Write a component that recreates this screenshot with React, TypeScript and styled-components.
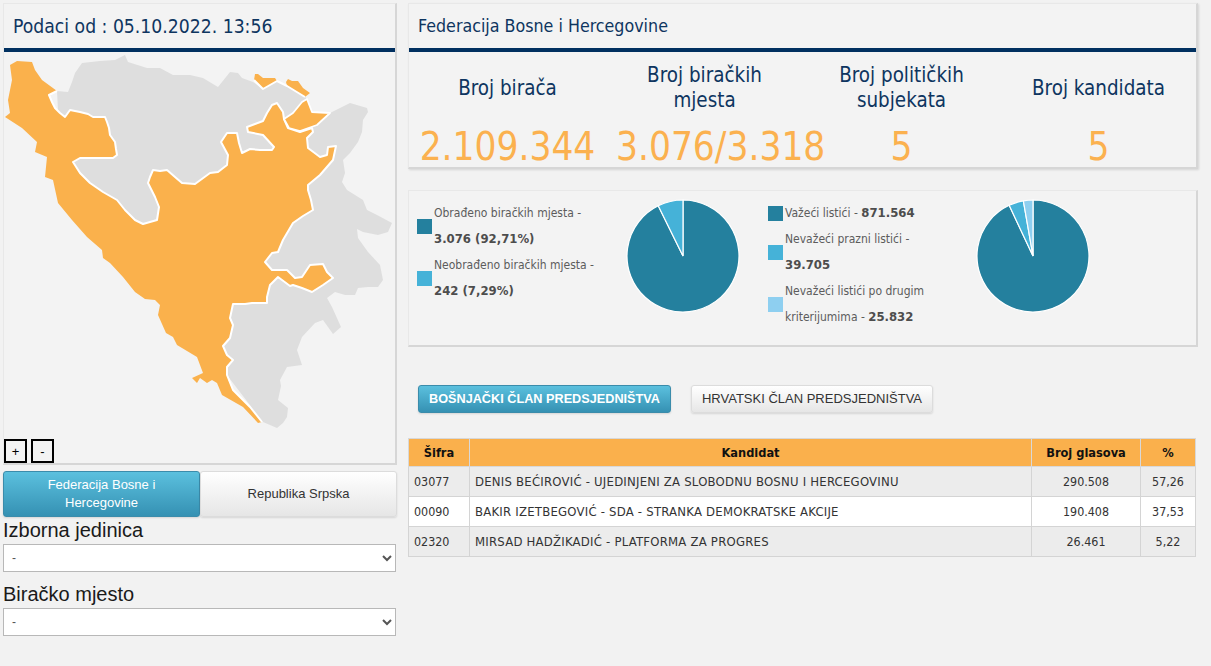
import React from "react";
import styled, { createGlobalStyle } from "styled-components";

const Global = createGlobalStyle`
  html, body { margin: 0; padding: 0; background: #f2f2f2; }
  body { font-family: "DejaVu Sans Condensed", "DejaVu Sans", sans-serif; font-stretch: condensed; overflow: hidden; }
`;

const Page = styled.div`
  display: flex;
  gap: 11px;
  padding: 3px 0 0 3px;
  width: 1211px;
  height: 666px;
  box-sizing: border-box;
`;
const LeftColumn = styled.div`
  width: 394px;
  flex: none;
  display: flex;
  flex-direction: column;
`;
const RightColumn = styled.div`
  width: 790px;
  flex: none;
  display: flex;
  flex-direction: column;
`;
const Card = styled.section`
  background: #f3f3f3;
  box-sizing: border-box;
  border-top: 1px solid #e8e8e8;
  border-left: 1px solid #e8e8e8;
  border-right: 2px solid #d6d6d6;
  border-bottom: 2px solid #d6d6d6;
`;
const MapCard = styled(Card)`
  height: 462px;
  position: relative;
`;
const CardHeader = styled.header<{ $big?: boolean }>`
  height: 44px;
  box-sizing: border-box;
  display: flex;
  align-items: center;
  padding-left: 9px;
  color: #0e3560;
  font-size: ${(p) => (p.$big ? 19.2 : 17.7)}px;
`;
const NavyRule = styled.div`
  height: 4px;
  background: #003060;
`;
const MapSvg = styled.svg`
  display: block;
  width: 392px;
  height: 411px;
`;
const ZoomControls = styled.div`
  position: absolute;
  left: 0;
  bottom: 0;
  display: flex;
  gap: 4px;
`;
const ZoomButton = styled.button`
  width: 23px;
  height: 24px;
  padding: 0;
  box-sizing: border-box;
  border: 2px solid #000;
  background: #f3f3f3;
  color: #000;
  font-family: "Liberation Sans", sans-serif;
  font-size: 13px;
`;
const RegionTabs = styled.div`
  display: flex;
  margin-top: 6px;
  height: 46px;
`;
const GradientButton = styled.button<{ $active?: boolean }>`
  box-sizing: border-box;
  font-family: "Liberation Sans", Arial, sans-serif;
  font-size: 13px;
  line-height: 18px;
  padding: 0 30px;
  border-radius: 3px;
  border: 1px solid ${(p) => (p.$active ? "#3b8cab" : "#dcdcdc")};
  color: ${(p) => (p.$active ? "#fff" : "#333")};
  background: ${(p) =>
    p.$active ? "linear-gradient(#5bc0de, #3591b3)" : "linear-gradient(#fff, #e6e6e6)"};
  box-shadow: 0 1px 2px rgba(0, 0, 0, 0.12);
`;
const RegionTab = styled(GradientButton)`
  flex: 1;
  height: 46px;
`;
const FieldLabel = styled.label`
  display: block;
  font-family: "Liberation Sans", Arial, sans-serif;
  font-size: 20px;
  line-height: 26px;
  color: #1a1a1a;
  height: 27px;
`;
const Select = styled.select`
  display: block;
  width: 393px;
  height: 28px;
  box-sizing: border-box;
  border: 1px solid #b8b8b8;
  background: #fff;
  color: #555;
  font-family: "Liberation Sans", Arial, sans-serif;
  font-size: 12px;
  padding-left: 4px;
  margin-bottom: 9px;
`;
const StatsCard = styled(Card)`
  height: 166px;
  box-shadow: 1px 1px 2px rgba(0, 0, 0, 0.12);
`;
const StatsGrid = styled.div`
  display: grid;
  grid-template-columns: repeat(4, 197px);
  height: 115px;
`;
const Stat = styled.div`
  display: grid;
  grid-template-columns: minmax(0, 1fr);
  grid-template-rows: 71px 44px;
  text-align: center;
  min-width: 0;
`;
const StatLabel = styled.div`
  align-self: center;
  color: #0e3560;
  font-size: 20.4px;
  line-height: 25px;
  padding: 0 25px;
  margin-top: 1px;
`;
const StatValue = styled.div`
  color: #fbb14f;
  font-size: 38.4px;
  line-height: 44px;
  white-space: nowrap;
  padding: 2px 10px 0;
`;
const ChartsCard = styled(Card)`
  margin-top: 21px;
  height: 157px;
  display: flex;
  padding-left: 8px;
`;
const LegendBlock = styled.div<{ $w: number }>`
  width: ${(p) => p.$w}px;
  flex: none;
  padding-top: 9px;
  box-sizing: border-box;
`;
const LegendRow = styled.div`
  display: flex;
  align-items: center;
  gap: 2px;
`;
const Swatch = styled.span<{ $c: string }>`
  width: 15px;
  height: 15px;
  flex: none;
  background: ${(p) => p.$c};
`;
const LegendText = styled.div`
  font-size: 12px;
  line-height: 26px;
  color: #5c5c5c;
  white-space: nowrap;
  b {
    color: #4d4d4d;
    font-size: 13px;
    font-family: "DejaVu Sans", sans-serif;
    font-stretch: condensed;
  }
`;
const PieSvg = styled.svg`
  width: 114px;
  height: 114px;
  margin-top: 8px;
  flex: none;
`;
const PieGap = styled.div<{ $w: number }>`
  width: ${(p) => p.$w}px;
  flex: none;
`;
const TabBar = styled.div`
  display: flex;
  gap: 20px;
  margin: 38px 0 0 10px;
`;
const PresidencyTab = styled(GradientButton)`
  height: 28px;
  font-size: ${(p) => (p.$active ? 12.7 : 13)}px;
  padding: 0;
  white-space: nowrap;
  width: ${(p) => (p.$active ? 253 : 242)}px;
  font-weight: ${(p) => (p.$active ? 700 : 400)};
`;
const Table = styled.table`
  border-collapse: collapse;
  margin-top: 25px;
  width: 787px;
  table-layout: fixed;
  font-size: 12.4px;
  color: #333;
`;
const Th = styled.th`
  background: #fab04c;
  color: #111;
  border: 1px solid #d8d8d8;
  height: 27px;
  padding: 0;
  font-size: 12.7px;
  font-family: "DejaVu Sans", sans-serif;
  font-stretch: condensed;
`;
const Tr = styled.tr<{ $odd: boolean }>`
  background: ${(p) => (p.$odd ? "#ececec" : "#fff")};
`;
const Td = styled.td<{ $center?: boolean }>`
  border: 1px solid #d4d4d4;
  height: 29px;
  padding: 0 5px;
  text-align: ${(p) => (p.$center ? "center" : "left")};
  white-space: nowrap;
`;
const NameCell = styled(Td)`
  font-size: 13px;
  letter-spacing: 0.22px;
`;

const ORANGE = "#fab14c";
const border =
  "57,91 49,95 52,102 55,108 60,113 65,117 70,110 80,112 88,114 93,117 105,117 107,122 109,128 110,135 115,142 116,149 117,155 113,158 95,158 80,158 73,162 80,173 90,183 103,192 117,200 125,210 135,220 143,224 157,220 159,207 155,197 148,183 150,177 153,170 160,171 167,170 175,177 182,183 195,184 210,173 218,172 227,165 228,155 221,142 227,133 237,133 239,143 242,153 250,149 260,150 272,150 274,147 263,135 248,132 247,127 263,121 267,113 272,105 277,103 283,112 284,119 288,128 300,132 312,128 313,132 307,138 308,148 320,157 327,155 328,147 336,146 333,160 320,175 308,185 308,190 311,200 313,210 303,216 293,223 283,240 278,252 272,253 265,262 272,270 287,270 295,278 302,277 310,265 323,264 327,272 333,278 323,285 312,292 302,288 293,285 290,286 278,277 270,285 267,297 267,303 258,303 252,303 245,304 233,304 230,318 233,325 230,338 223,346 227,355 233,360 227,367 227,375 233,390 250,407 262,422";
const coast =
  "258,423 243,407 222,395 217,383 212,380 207,383 200,378 197,383 192,378 203,373 197,357 177,345 173,337 166,333 158,315 160,305 155,300 145,299 135,292 123,277 110,263 103,258 102,250 87,237 72,220 58,203 53,180 45,177 47,157 35,152 37,142 22,128 5,117 10,113 8,100 12,80 10,65 17,61 32,62 35,70 42,80";
const grayOuter =
  "57,91 68,92 72,82 75,73 82,63 100,61 115,60 125,55 128,62 147,68 160,68 173,75 190,75 203,78 218,87 230,72 238,73 242,78 253,82 263,89 277,81 287,86 305,97 307,99 312,112 330,113 350,103 367,108 368,112 363,120 362,132 358,142 350,153 343,160 345,173 342,182 347,190 363,200 367,210 377,215 392,223 388,232 378,235 363,232 357,229 358,238 368,252 380,265 383,280 378,287 368,287 358,288 355,295 345,295 335,292 327,298 332,307 341,327 333,334 328,327 323,320 315,323 302,337 297,350 302,365 287,367 280,380 281,386 278,400 288,408 287,417 283,423 277,428 263,422 200,340 120,250 60,150";
const isleOne = "255,74 258,74 263,78 275,78 277,81 263,89 254,80";
const isleTwo = "286,82 288,79 292,81 298,81 303,88 310,93 305,97 287,86";
const isleBrcko =
  "302,102 307,99 312,112 330,113 317,125 300,131 289,128 284,119 293,113";
const isleEdge = "254,80 263,89 277,81 287,86 305,97";

const MapDrawing = () => (
  <MapSvg viewBox="4 52 392 411">
    <polygon points={grayOuter} fill="#dedede" />
    <polygon points={`${border} ${coast}`} fill={ORANGE} />
    <polyline points={border} fill="none" stroke="#fff" strokeWidth="2" strokeLinejoin="round" />
    <polygon points={isleOne} fill={ORANGE} />
    <polygon points={isleTwo} fill={ORANGE} />
    <polygon points={isleBrcko} fill={ORANGE} stroke="#fff" strokeWidth="1.8" strokeLinejoin="round" />
    <polyline points={isleEdge} fill="none" stroke="#fff" strokeWidth="2" strokeLinejoin="round" />
  </MapSvg>
);

const pieColors = ["#24809e", "#45b2d8", "#8ecff0"];

function Pie({ values }: { values: number[] }) {
  const total = values.reduce((a, b) => a + b, 0);
  let angle = 0;
  const c = 57;
  const r = 56;
  return (
    <PieSvg viewBox="0 0 114 114">
      {values.map((v, i) => {
        const a0 = angle;
        angle += (v / total) * Math.PI * 2;
        const x0 = c + r * Math.sin(a0);
        const y0 = c - r * Math.cos(a0);
        const x1 = c + r * Math.sin(angle);
        const y1 = c - r * Math.cos(angle);
        const large = angle - a0 > Math.PI ? 1 : 0;
        return (
          <path
            key={i}
            d={`M${c} ${c}L${x0} ${y0}A${r} ${r} 0 ${large} 1 ${x1} ${y1}Z`}
            fill={pieColors[i]}
            stroke="#fff"
            strokeWidth="1.2"
          />
        );
      })}
    </PieSvg>
  );
}

const stats = [
  ["Broj birača", "2.109.344"],
  ["Broj biračkih mjesta", "3.076/3.318"],
  ["Broj političkih subjekata", "5"],
  ["Broj kandidata", "5"],
];

const rows = [
  ["03077", "DENIS BEĆIROVIĆ - UJEDINJENI ZA SLOBODNU BOSNU I HERCEGOVINU", "290.508", "57,26"],
  ["00090", "BAKIR IZETBEGOVIĆ - SDA - STRANKA DEMOKRATSKE AKCIJE", "190.408", "37,53"],
  ["02320", "MIRSAD HADŽIKADIĆ - PLATFORMA ZA PROGRES", "26.461", "5,22"],
];

export default function App() {
  return (
    <Page>
      <Global />
      <LeftColumn>
        <MapCard>
          <CardHeader $big>Podaci od : 05.10.2022. 13:56</CardHeader>
          <NavyRule />
          <MapDrawing />
          <ZoomControls>
            <ZoomButton>+</ZoomButton>
            <ZoomButton>-</ZoomButton>
          </ZoomControls>
        </MapCard>
        <RegionTabs>
          <RegionTab $active>Federacija Bosne i Hercegovine</RegionTab>
          <RegionTab>Republika Srpska</RegionTab>
        </RegionTabs>
        <FieldLabel>Izborna jedinica</FieldLabel>
        <Select defaultValue="-">
          <option>-</option>
        </Select>
        <FieldLabel>Biračko mjesto</FieldLabel>
        <Select defaultValue="-">
          <option>-</option>
        </Select>
      </LeftColumn>
      <RightColumn>
        <StatsCard>
          <CardHeader>Federacija Bosne i Hercegovine</CardHeader>
          <NavyRule />
          <StatsGrid>
            {stats.map(([label, value]) => (
              <Stat key={label}>
                <StatLabel>{label}</StatLabel>
                <StatValue>{value}</StatValue>
              </Stat>
            ))}
          </StatsGrid>
        </StatsCard>
        <ChartsCard>
          <LegendBlock $w={204}>
            <LegendRow>
              <Swatch $c={pieColors[0]} />
              <LegendText>
                Obrađeno biračkih mjesta -<br />
                <b>3.076 (92,71%)</b>
              </LegendText>
            </LegendRow>
            <LegendRow>
              <Swatch $c={pieColors[1]} />
              <LegendText>
                Neobrađeno biračkih mjesta -<br />
                <b>242 (7,29%)</b>
              </LegendText>
            </LegendRow>
          </LegendBlock>
          <PieGap $w={5} />
          <Pie values={[92.71, 7.29]} />
          <PieGap $w={28} />
          <LegendBlock $w={205}>
            <LegendRow>
              <Swatch $c={pieColors[0]} />
              <LegendText>
                Važeći listići - <b>871.564</b>
              </LegendText>
            </LegendRow>
            <LegendRow>
              <Swatch $c={pieColors[1]} />
              <LegendText>
                Nevažeći prazni listići -<br />
                <b>39.705</b>
              </LegendText>
            </LegendRow>
            <LegendRow>
              <Swatch $c={pieColors[2]} />
              <LegendText>
                Nevažeći listići po drugim
                <br />
                kriterijumima - <b>25.832</b>
              </LegendText>
            </LegendRow>
          </LegendBlock>
          <PieGap $w={3} />
          <Pie values={[871564, 39705, 25832]} />
        </ChartsCard>
        <TabBar>
          <PresidencyTab $active>BOŠNJAČKI ČLAN PREDSJEDNIŠTVA</PresidencyTab>
          <PresidencyTab>HRVATSKI ČLAN PREDSJEDNIŠTVA</PresidencyTab>
        </TabBar>
        <Table>
          <colgroup>
            <col style={{ width: 61 }} />
            <col style={{ width: 562 }} />
            <col style={{ width: 109 }} />
            <col style={{ width: 55 }} />
          </colgroup>
          <thead>
            <tr>
              <Th>Šifra</Th>
              <Th>Kandidat</Th>
              <Th>Broj glasova</Th>
              <Th>%</Th>
            </tr>
          </thead>
          <tbody>
            {rows.map((r, i) => (
              <Tr key={r[0]} $odd={i % 2 === 0}>
                <Td>{r[0]}</Td>
                <NameCell>{r[1]}</NameCell>
                <Td $center>{r[2]}</Td>
                <Td $center>{r[3]}</Td>
              </Tr>
            ))}
          </tbody>
        </Table>
      </RightColumn>
    </Page>
  );
}
